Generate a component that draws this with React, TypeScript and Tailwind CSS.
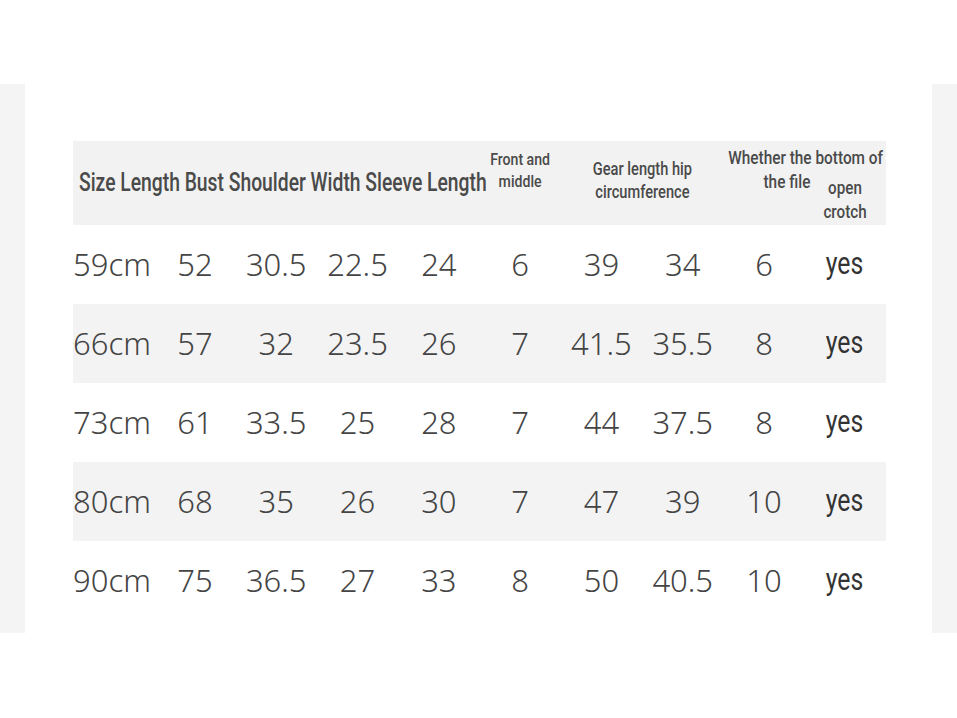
const rows = [
  ["59cm", "52", "30.5", "22.5", "24", "6", "39", "34", "6"],
  ["66cm", "57", "32", "23.5", "26", "7", "41.5", "35.5", "8"],
  ["73cm", "61", "33.5", "25", "28", "7", "44", "37.5", "8"],
  ["80cm", "68", "35", "26", "30", "7", "47", "39", "10"],
  ["90cm", "75", "36.5", "27", "33", "8", "50", "40.5", "10"],
];

const roboto = { fontFamily: 'Roboto, "Liberation Sans", sans-serif' };

export default function App() {
  return (
    <div className="w-[957px] h-[718px] bg-white flex flex-col">
      <div className="h-[84px]" />
      <div className="h-[549px] bg-[#f4f4f4] px-[25px]">
        <div className="h-full bg-white pt-[57px] pl-[48px] pr-[46px]">
          {/* header */}
          <div className="grid grid-cols-10 h-[84px] bg-[#f2f2f2] text-[#4a4a4a] font-medium" style={roboto}>
            <div className="col-span-5 row-start-1 flex items-center pl-[6px]">
              <span className="whitespace-nowrap text-[25px] scale-x-[0.772] origin-left inline-block">
                Size Length Bust Shoulder Width Sleeve Length
              </span>
            </div>
            <div className="col-start-6 row-start-1 pt-[7px] flex justify-center">
              <span className="whitespace-nowrap text-center text-[17px] leading-[22px] scale-x-[0.83] inline-block">
                Front and
                <br />
                middle
              </span>
            </div>
            <div className="col-start-7 col-span-2 row-start-1 pt-[16px] flex justify-center">
              <span className="whitespace-nowrap text-center text-[19px] leading-[23px] scale-x-[0.77] inline-block">
                Gear length hip
                <br />
                circumference
              </span>
            </div>
            <div className="col-start-9 col-span-2 row-start-1 pt-[5px] flex justify-center pl-[2px]">
              <span className="whitespace-nowrap text-center text-[19px] leading-[24px] scale-x-[0.81] inline-block">
                Whether the bottom of
                <br />
                <span className="pr-[46px]">the file</span>
              </span>
            </div>
            <div className="col-start-10 row-start-1 pt-[35px] flex justify-center">
              <span className="whitespace-nowrap text-center text-[19px] leading-[24px] scale-x-[0.8] inline-block">
                open
                <br />
                crotch
              </span>
            </div>
          </div>
          {/* rows */}
          {rows.map((r, i) => (
            <div
              key={r[0]}
              className={`grid grid-cols-10 h-[79px] items-center text-[#444] ${i % 2 === 1 ? "bg-[#f3f3f3]" : ""}`}
            >
              {r.map((v, j) => (
                <div
                  key={j}
                  className={`text-[31px] font-light ${j === 0 ? "text-left" : "text-center"}`}
                  style={{ fontFamily: '"Noto Sans", Lato, sans-serif' }}
                >
                  {v}
                </div>
              ))}
              <div className="flex justify-center pr-[2px]" style={roboto}>
                <span className="text-[31px] text-[#333] scale-x-[0.8] inline-block">yes</span>
              </div>
            </div>
          ))}
        </div>
      </div>
      <div className="flex-1" />
    </div>
  );
}
